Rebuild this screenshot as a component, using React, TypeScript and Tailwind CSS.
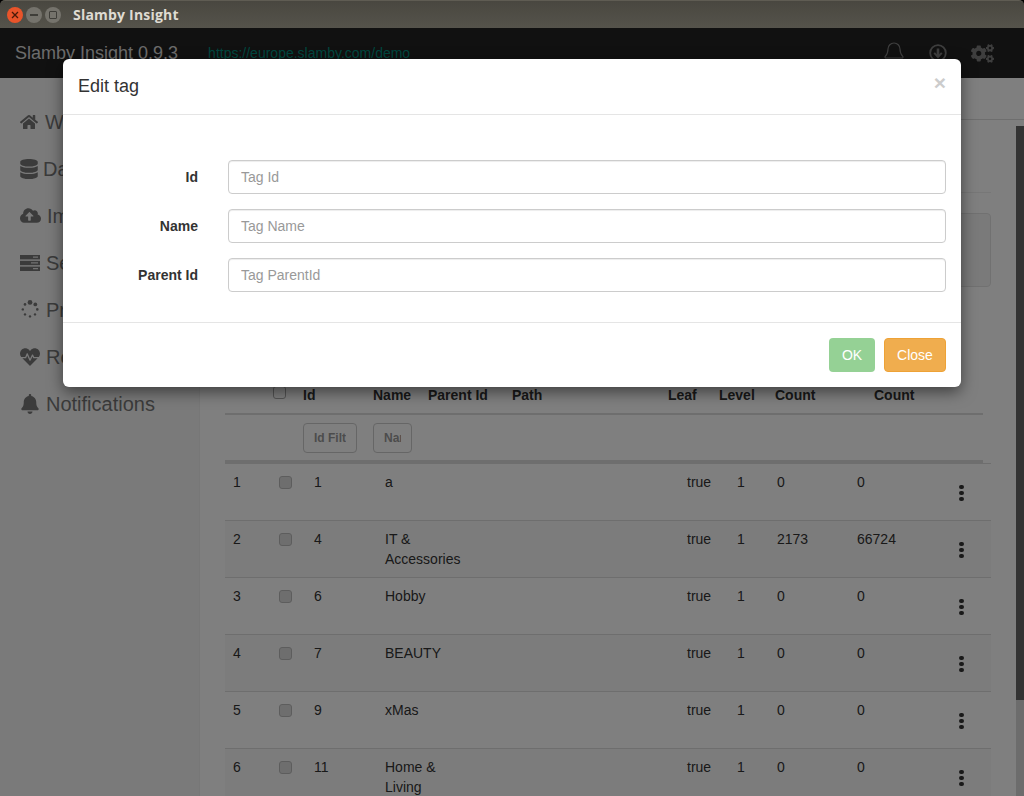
import { Bell } from "lucide-react";
import { FaHome, FaDatabase, FaCloudUploadAlt, FaHeartbeat, FaBell, FaCogs } from "react-icons/fa";

function Spinner() {
  const dots: [number, number, number][] = [
    [9, 2.4, 2.4], [14.3, 4.4, 1.9], [16.3, 9.4, 1.3], [14, 14.4, 1.2], [9, 16.4, 1.2], [4, 14.4, 1.2], [1.8, 9.4, 1.2], [4, 4.4, 1.3],
  ];
  return (
    <svg width="18" height="19" viewBox="0 0 18 19" className="ml-px fill-current">
      {dots.map(([x, y, r], i) => (
        <circle key={i} cx={x} cy={y} r={r} />
      ))}
    </svg>
  );
}

function ServerIcon() {
  return (
    <svg width="20" height="16" viewBox="0 0 20 16">
      <rect x="0" y="0" width="20" height="4.4" fill="currentColor" />
      <rect x="0" y="5.8" width="20" height="4.4" fill="currentColor" />
      <rect x="0" y="11.6" width="20" height="4.4" fill="currentColor" />
      <rect x="13" y="1.6" width="5" height="1" fill="#fff" />
      <rect x="11" y="7.4" width="7" height="1" fill="#fff" />
      <rect x="13" y="13.2" width="5" height="1" fill="#fff" />
    </svg>
  );
}

function DownloadIcon() {
  return (
    <svg width="18" height="18" viewBox="0 0 18 18" fill="none" stroke="currentColor">
      <circle cx="9" cy="9" r="7.8" strokeWidth="1.8" />
      <path d="M9 4.5v8" strokeWidth="2.6" />
      <path d="M5.2 8.8 9 13l3.8-4.2" strokeWidth="2" />
    </svg>
  );
}

const side: { icon: React.ReactNode; label: string; gap: string }[] = [
  { icon: <FaHome size={18} />, label: "Welcome", gap: "gap-[7px]" },
  { icon: <FaDatabase size={20} className="-ml-px" />, label: "Datasets", gap: "gap-[4px]" },
  { icon: <FaCloudUploadAlt size={21} />, label: "Imports", gap: "gap-[6px]" },
  { icon: <ServerIcon />, label: "Services", gap: "gap-[6px]" },
  { icon: <Spinner />, label: "Processes", gap: "gap-[7px]" },
  { icon: <FaHeartbeat size={20} />, label: "Resources", gap: "gap-[6px]" },
  { icon: <FaBell size={20} />, label: "Notifications", gap: "gap-[6px]" },
];

const rows: [string, string, string, string, string][] = [
  ["1", "1", "a", "0", "0"],
  ["2", "4", "IT & Accessories", "2173", "66724"],
  ["3", "6", "Hobby", "0", "0"],
  ["4", "7", "BEAUTY", "0", "0"],
  ["5", "9", "xMas", "0", "0"],
  ["6", "11", "Home & Living", "0", "0"],
];

function Field({ label, placeholder }: { label: string; placeholder: string }) {
  return (
    <div className="flex items-center gap-[30px]">
      <label className="w-[120px] text-right text-sm font-bold text-[#333]">{label}</label>
      <input
        placeholder={placeholder}
        className="h-[34px] flex-1 rounded border border-[#ccc] px-3 text-sm text-[#555] shadow-[inset_0_1px_1px_rgba(0,0,0,0.075)] outline-none placeholder:text-[#999]"
      />
    </div>
  );
}

export default function App() {
  return (
    <div className="flex h-[796px] w-[1024px] flex-col overflow-hidden bg-black font-['Liberation_Sans',sans-serif]">
      <div className="flex h-[28px] shrink-0 items-center rounded-t-[5px] border-t border-[#5f5c53] bg-gradient-to-b from-[#494740] to-[#55534b] pl-[7px] pt-px">
        <div className="flex h-4 w-4 items-center justify-center rounded-full bg-[#e9542a] text-[#4a1a08]">
          <svg width="8" height="8" viewBox="0 0 8 8" stroke="currentColor" strokeWidth="1.3">
            <path d="M1 1l6 6M7 1 1 7" />
          </svg>
        </div>
        <div className="ml-[3px] flex h-4 w-4 items-center justify-center rounded-full bg-[#75736c]">
          <div className="h-[2px] w-2 bg-[#3f3e39]" />
        </div>
        <div className="ml-[3px] flex h-4 w-4 items-center justify-center rounded-full bg-[#75736c]">
          <div className="h-2 w-2 rounded-[1px] border border-[#3f3e39]" />
        </div>
        <span className="ml-[12px] font-['Open_Sans',sans-serif] text-sm font-bold tracking-[0.2px] text-[#dfdbd2]">
          Slamby Insight
        </span>
      </div>

      <div className="relative flex min-h-0 flex-1 flex-col bg-white">
        <div className="flex h-[50px] shrink-0 items-center bg-[#222] pl-[15px]">
          <span className="text-lg text-[#d8d8d8]">Slamby Insight 0.9.3</span>
          <span className="ml-[30px] text-sm text-[#008f7f]">https://europe.slamby.com/demo</span>
          <div className="ml-auto flex items-center text-[#7d7d7d]">
            <Bell size={24} strokeWidth={1.2} />
            <div className="ml-[23px]">
              <DownloadIcon />
            </div>
            <div className="ml-[24px] mr-[30px]">
              <FaCogs size={23} />
            </div>
          </div>
        </div>

        <div className="flex min-h-0 flex-1">
          <div className="w-[200px] shrink-0 border-r border-[#eee] bg-[#f5f5f5] pl-5 pt-[20px] text-xl text-[#777]">
            {side.map((s) => (
              <div key={s.label} className={`flex h-[47px] items-center ${s.gap}`}>
                {s.icon}
                <span>{s.label}</span>
              </div>
            ))}
          </div>

          <div className="relative min-w-0 flex-1 overflow-hidden">
            <div className="mt-[41px] h-px bg-[#ddd]" />
            <div className="mr-[33px] mt-[72px] h-px bg-[#eee]" />
            <div className="ml-[25px] mr-[33px] mt-5 h-[74px] rounded border border-[#e3e3e3] bg-[#f5f5f5]" />

            <div className="ml-[25px] mr-[33px] mt-[98px] text-sm text-[#333]">
              <div className="mr-[8px] flex h-[30px] items-start border-b-2 border-[#ddd] font-bold leading-5">
                <div className="w-[48px]" />
                <input type="checkbox" className="mt-px h-[13px] w-[13px] appearance-none rounded-[3px] border border-[#aaa]" />
                <div className="ml-[17px] w-[70px]">Id</div>
                <div className="w-[55px]">Name</div>
                <div className="w-[84px]">Parent Id</div>
                <div className="w-[156px]">Path</div>
                <div className="w-[51px]">Leaf</div>
                <div className="w-[56px]">Level</div>
                <div className="w-[99px]">Count</div>
                <div>Count</div>
              </div>
              <div className="mr-[8px] flex h-[48px] items-center gap-4 border-b-[3px] border-[#ddd] pl-[78px] pt-px">
                <input placeholder="Id Filter" className="h-[30px] w-[54px] rounded border border-[#ccc] px-[10px] text-xs font-bold outline-none placeholder:text-[#999]" />
                <input placeholder="Name Filter" className="h-[30px] w-[39px] rounded border border-[#ccc] px-[10px] text-xs font-bold outline-none placeholder:text-[#999]" />
              </div>
              {rows.map((r, i) => (
                <div
                  key={r[0]}
                  className={`grid h-[57px] grid-cols-[46px_35px_71px_302px_50px_40px_80px_100px_1fr] border-t border-[#ddd] pl-2 pt-2 leading-5 ${i % 2 === 1 ? "bg-[#f9f9f9]" : ""}`}
                >
                  <div>{r[0]}</div>
                  <div className="pt-[4px]">
                    <div className="h-[13px] w-[13px] rounded-[3px] border border-[#bbb] bg-[#ddd]" />
                  </div>
                  <div>{r[1]}</div>
                  <div className="w-[90px]">{r[2]}</div>
                  <div>true</div>
                  <div>1</div>
                  <div>{r[3]}</div>
                  <div>{r[4]}</div>
                  <div className="flex flex-col gap-[2px] pl-[2px] pt-[13px]">
                    <div className="h-[4px] w-[5px] rounded-full bg-[#333]" />
                    <div className="h-[4px] w-[5px] rounded-full bg-[#333]" />
                    <div className="h-[4px] w-[5px] rounded-full bg-[#333]" />
                  </div>
                </div>
              ))}
            </div>

            <div className="absolute bottom-0 right-0 top-[48px] w-2 bg-[#d8d8d8]">
              <div className="h-[574px] bg-[#666]" />
            </div>
          </div>
        </div>

        <div className="absolute inset-0 bg-black/50" />

        <div className="absolute left-[63px] top-[31px] w-[898px] rounded-md bg-white shadow-[0_5px_15px_rgba(0,0,0,0.5)]">
          <div className="flex h-[56px] items-center justify-between border-b border-[#e5e5e5] px-[15px] pb-[2px]">
            <span className="text-lg text-[#333]">Edit tag</span>
            <span className="mb-[6px] text-[21px] font-bold leading-none text-[#ccc]">×</span>
          </div>
          <div className="flex h-[207px] flex-col gap-[15px] px-[15px] pt-[45px]">
            <Field label="Id" placeholder="Tag Id" />
            <Field label="Name" placeholder="Tag Name" />
            <Field label="Parent Id" placeholder="Tag ParentId" />
          </div>
          <div className="flex h-[65px] items-center justify-end gap-[9px] border-t border-[#e5e5e5] px-[15px]">
            <button className="h-[34px] w-[46px] rounded bg-[#5cb85c]/65 text-sm text-white">OK</button>
            <button className="h-[34px] w-[62px] rounded border border-[#eea236] bg-[#f0ad4e] text-sm text-white">Close</button>
          </div>
        </div>
      </div>
    </div>
  );
}
